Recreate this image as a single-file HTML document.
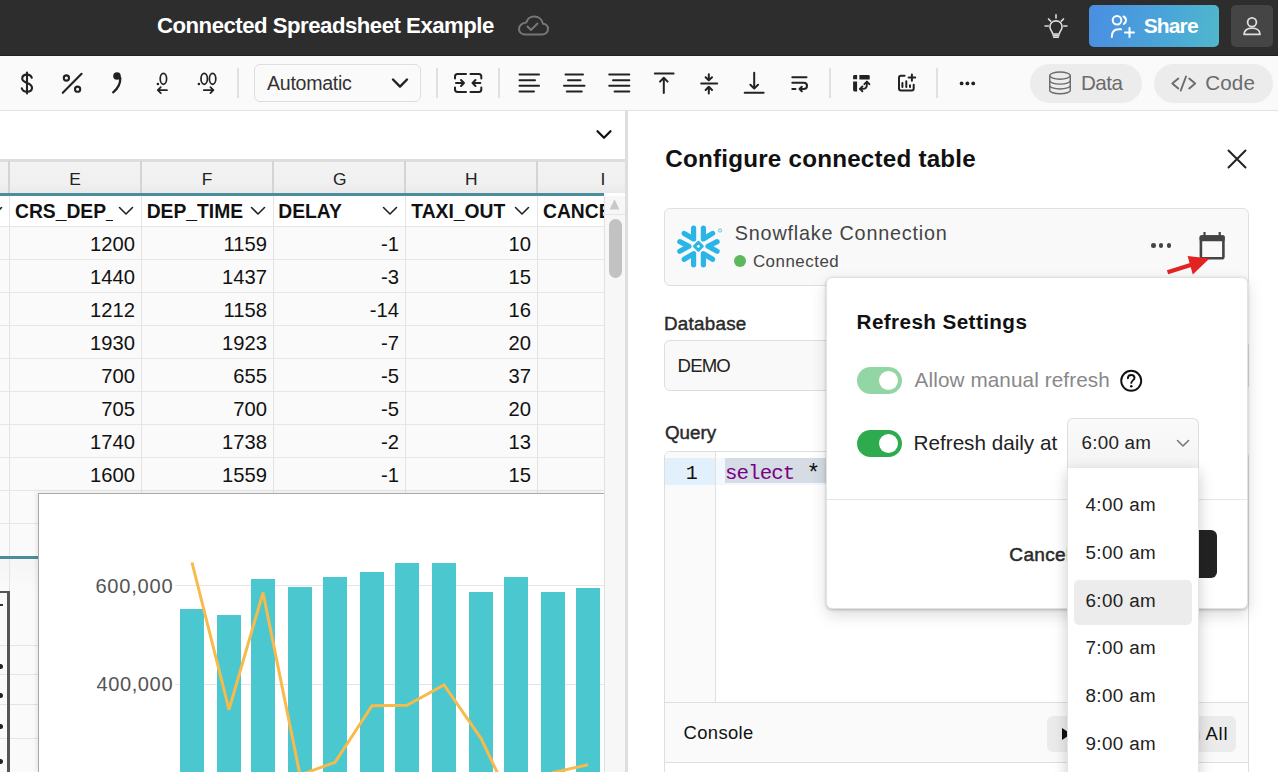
<!DOCTYPE html>
<html><head><meta charset="utf-8"><style>
html,body{margin:0;padding:0;}
body{width:1278px;height:772px;overflow:hidden;position:relative;background:#fff;font-family:'Liberation Sans', sans-serif;}
.t{position:absolute;white-space:nowrap;line-height:1;}
</style></head><body>
<div style="position:absolute;left:0px;top:0px;width:1278px;height:56px;background:#2d2d2d;"></div>
<div style="position:absolute;left:0px;top:55px;width:1278px;height:1px;background:#222;"></div>
<div class="t" style="left:157.00px;top:14.53px;font-size:22.2px;font-weight:700;color:#fff;font-family:'Liberation Sans', sans-serif;letter-spacing:-0.503px;">Connected Spreadsheet Example</div>
<svg style="position:absolute;left:514px;top:12px;" width="38" height="28" viewBox="0 0 38 28" fill="none"><path d="M11,22.5 H28 C31.5,22.5 34,20 34,17 C34,14 31.8,11.8 29,11.7 C28,7.5 24.5,4.5 20.3,4.5 C16.5,4.5 13.3,7 12.3,10.4 C8.3,10.6 5,13.5 5,17 C5,20 7.6,22.5 11,22.5 Z" stroke="#777" stroke-width="2" stroke-linejoin="round"/><path d="M13.5,14.5 L17,18 L23.5,11.5" stroke="#777" stroke-width="2" stroke-linecap="round" stroke-linejoin="round"/></svg>
<svg style="position:absolute;left:1041px;top:11px;" width="30" height="30" viewBox="0 0 32 32" fill="none"><g stroke="#ddd" stroke-width="1.7" stroke-linecap="round"><path d="M16,4 V7.5"/><path d="M8,8.5 L10.3,10.8"/><path d="M24,8.5 L21.7,10.8"/><path d="M4.3,16 H7.8"/><path d="M24.2,16 H27.7"/><path d="M12.5,24.5 C12.5,22 9.5,20.5 9.5,16.8 C9.5,13.2 12.4,10.5 16,10.5 C19.6,10.5 22.5,13.2 22.5,16.8 C22.5,20.5 19.5,22 19.5,24.5 Z" stroke-linejoin="round"/><path d="M13,26.3 H19"/><path d="M13.5,28 H18.5"/></g></svg>
<div style="position:absolute;left:1089px;top:5px;width:130px;height:42px;background:linear-gradient(100deg,#4a8ee2 0%,#4aa6d8 60%,#50b8cc 100%);border-radius:5px;"></div>
<svg style="position:absolute;left:1108px;top:13px;" width="30" height="28" viewBox="0 0 30 28" fill="none"><g stroke="#fff" stroke-width="2" stroke-linecap="round" fill="none"><circle cx="9" cy="7.3" r="4.3"/><path d="M3.8,24 C3.8,19 6,16.3 10.5,16.3 H13"/><path d="M15.5,3.5 C17.5,4.5 18,6 18,7.3 C18,8.8 17.3,10 15.8,11"/><path d="M21.5,15 V24"/><path d="M17,19.5 H26"/></g></svg>
<div class="t" style="left:1143.70px;top:14.85px;font-size:21px;font-weight:700;color:#fff;font-family:'Liberation Sans', sans-serif;letter-spacing:-0.872px;">Share</div>
<div style="position:absolute;left:1231px;top:5px;width:42px;height:42px;background:#454545;border-radius:5px;"></div>
<svg style="position:absolute;left:1240px;top:14px;" width="24" height="24" viewBox="0 0 24 24" fill="none"><g stroke="#ddd" stroke-width="1.8" fill="none" stroke-linejoin="round"><circle cx="12" cy="8.3" r="4.4"/><path d="M4,20.3 C4,16.5 7.5,14.2 12,14.2 C16.5,14.2 20,16.5 20,20.3 Z"/></g></svg>
<div style="position:absolute;left:0px;top:56px;width:1278px;height:54px;background:#fafafa;"></div>
<div style="position:absolute;left:0px;top:110px;width:1278px;height:1px;background:#e2e2e2;"></div>
<div style="position:absolute;left:237px;top:68px;width:2px;height:30px;background:#e0e0e0;"></div>
<div style="position:absolute;left:436px;top:68px;width:2px;height:30px;background:#e0e0e0;"></div>
<div style="position:absolute;left:498px;top:68px;width:2px;height:30px;background:#e0e0e0;"></div>
<div style="position:absolute;left:829px;top:68px;width:2px;height:30px;background:#e0e0e0;"></div>
<div style="position:absolute;left:936px;top:68px;width:2px;height:30px;background:#e0e0e0;"></div>
<svg style="position:absolute;left:0px;top:55px;" width="1278" height="55" viewBox="0 0 1278 55" fill="none"><g stroke="#222" stroke-width="2.1" stroke-linecap="round" fill="none" transform="translate(0,-55)"><path d="M27,72.5 V93.5"/><path d="M31.8,77.8 C31.2,75.8 29.6,74.6 27,74.6 C24,74.6 22.2,76.2 22.2,78.6 C22.2,81.2 24.6,82.1 27,83 C29.6,83.9 32,84.9 32,87.8 C32,90.4 30,91.8 27,91.8 C24.2,91.8 22.4,90.5 21.8,88.3"/><circle cx="66.4" cy="78" r="2.6"/><circle cx="77.6" cy="89.2" r="2.6"/><path d="M81.6,73.8 L62.8,92.8"/><path d="M120.3,78 C120.5,84 118.5,88 113.2,92.3" stroke-width="2.3"/></g><circle cx="117" cy="21" r="3.8" fill="#222"/><g transform="translate(0,-55)" fill="none" stroke="#222" stroke-width="1.7" stroke-linecap="round" stroke-linejoin="round"><ellipse cx="163.4" cy="78.8" rx="3.2" ry="5.5"/><path d="M157.8,90.2 H167 M160.8,87.2 L157.8,90.2 L160.8,93.2"/><ellipse cx="204.2" cy="78.8" rx="3.2" ry="5.5"/><ellipse cx="212.6" cy="78.8" rx="3.2" ry="5.5"/><path d="M203.8,90.2 H213.4 M210.4,87.2 L213.4,90.2 L210.4,93.2"/></g><circle cx="157.9" cy="29" r="1.3" fill="#222"/><circle cx="198.9" cy="29" r="1.3" fill="#222"/><g transform="translate(0,-55)" fill="none" stroke="#222" stroke-width="2" stroke-linecap="round" stroke-linejoin="round"><path d="M466,74 H457.5 Q455,74 455,76.5 V78.6 M455,87.4 V89.6 Q455,92 457.5,92 H466"/><path d="M470.5,74 H479 Q481.3,74 481.3,76.5 V78.6 M481.3,87.4 V89.6 Q481.3,92 479,92 H470.5"/><path d="M456,83 H464 M461,80 L464,83 L461,86"/><path d="M480.3,83 H472.5 M475.5,80 L472.5,83 L475.5,86"/><path d="M519.5,74.6 H539 M519.5,80.2 H535 M519.5,85.8 H539 M519.5,91.5 H534"/><path d="M565.5,74.6 H583 M568,80.2 H580.5 M564,85.8 H584.5 M566.8,91.5 H581.8"/><path d="M609.2,74.6 H629.3 M613,80.2 H629.3 M609.2,85.8 H629.3 M614.6,91.5 H629.3"/><path d="M654.8,73.4 H673.6 M663.8,77.8 V93 M660,81.6 L663.8,77.8 L667.6,81.6"/><path d="M701.2,83.6 H717.2 M708.8,74.2 V80.2 M705.6,77.2 L708.8,80.4 L712,77.2 M708.8,93.4 V87 M705.6,90 L708.8,86.8 L712,90"/><path d="M744.7,92.7 H763.6 M754.2,72.8 V88.6 M750.4,84.8 L754.2,88.6 L758,84.8"/><path d="M792.3,77.2 H806.5 M792.3,82.8 H803.5 C806,82.8 807,84.3 807,86 C807,87.7 806,89 803.5,89 H799.5 M801.8,86.7 L799.5,89 L801.8,91.3 M792.3,89 H795.5"/></g><g transform="translate(0,-55)"><path d="M853.1,76.3 Q853.1,75 854.4,75 H857.1 V79.3 H853.1 Z" fill="#222"/><path d="M859.4,75 H868.4 Q869.7,75 869.7,76.3 V79.4 H859.4 Z" fill="#222"/><path d="M853.1,81.6 H857.1 V91.4 H854.4 Q853.1,91.4 853.1,90.1 Z" fill="#222"/><path d="M860.2,88.9 H862.8 C865.6,88.9 866.9,87.2 866.9,84.4 V82" stroke="#222" stroke-width="1.9" fill="none" stroke-linecap="round"/><path d="M864.4,84.2 L866.9,81.6 L869.4,84.2" stroke="#222" stroke-width="1.9" fill="none" stroke-linecap="round" stroke-linejoin="round"/><path d="M862.4,86.5 L859.9,88.9 L862.4,91.3" stroke="#222" stroke-width="1.9" fill="none" stroke-linecap="round" stroke-linejoin="round"/><path d="M904.6,75.8 H901 Q899,75.8 899,77.8 V88.5 Q899,90.5 901,90.5 H911.7 Q913.7,90.5 913.7,88.5 V84.8" stroke="#222" stroke-width="2" fill="none" stroke-linecap="round"/><path d="M902.4,83 V87 M906.3,81.3 V87 M910,85.2 V87 M911.9,74.6 V80.8 M908.6,77.5 H915.2" stroke="#222" stroke-width="2" fill="none" stroke-linecap="round"/><circle cx="961.6" cy="83.4" r="1.9" fill="#222"/><circle cx="967.4" cy="83.4" r="1.9" fill="#222"/><circle cx="973.2" cy="83.4" r="1.9" fill="#222"/></g></svg>
<div style="position:absolute;left:254px;top:64px;width:167px;height:38px;box-sizing:border-box;border:1px solid #dedede;border-radius:6px;background:#fafafa;"></div>
<div class="t" style="left:267.00px;top:73.74px;font-size:19.6px;font-weight:400;color:#333;font-family:'Liberation Sans', sans-serif;letter-spacing:-0.290px;">Automatic</div>
<svg style="position:absolute;left:388px;top:74px;" width="24" height="18" viewBox="0 0 24 18" fill="none"><path d="M5,5.5 L12,12.6 L19,5.5" stroke="#222" stroke-width="2.4" fill="none" stroke-linecap="round" stroke-linejoin="round"/></svg>
<div style="position:absolute;left:1030px;top:64px;width:112px;height:39px;background:#ececec;border-radius:20px;"></div>
<svg style="position:absolute;left:1047px;top:70px;" width="26" height="26" viewBox="0 0 26 26" fill="none"><g stroke="#6b6b6b" stroke-width="1.4" fill="none"><ellipse cx="13" cy="5.6" rx="10.3" ry="3.6"/><path d="M2.7,5.6 V20.2 C2.7,22.2 7.3,23.8 13,23.8 C18.7,23.8 23.3,22.2 23.3,20.2 V5.6"/><path d="M2.7,10.5 C2.7,12.5 7.3,14.1 13,14.1 C18.7,14.1 23.3,12.5 23.3,10.5"/><path d="M2.7,15.4 C2.7,17.4 7.3,19 13,19 C18.7,19 23.3,17.4 23.3,15.4"/></g></svg>
<div class="t" style="left:1081.00px;top:72.99px;font-size:20.6px;font-weight:400;color:#6b6b6b;font-family:'Liberation Sans', sans-serif;letter-spacing:-0.516px;">Data</div>
<div style="position:absolute;left:1154px;top:64px;width:119px;height:39px;background:#ececec;border-radius:20px;"></div>
<svg style="position:absolute;left:1168px;top:72px;" width="32" height="22" viewBox="0 0 32 22" fill="none"><g stroke="#6b6b6b" stroke-width="1.9" fill="none" stroke-linecap="round" stroke-linejoin="round"><path d="M10.3,6.5 L4.3,11.5 L10.3,16.5"/><path d="M18,4.5 L12.8,18.5"/><path d="M21.2,6.5 L27.2,11.5 L21.2,16.5"/></g></svg>
<div class="t" style="left:1205.20px;top:72.99px;font-size:20.6px;font-weight:400;color:#6b6b6b;font-family:'Liberation Sans', sans-serif;letter-spacing:0.174px;">Code</div>
<div style="position:absolute;left:0px;top:111px;width:625px;height:48px;background:#fff;"></div>
<svg style="position:absolute;left:590px;top:124px;" width="28" height="22" viewBox="0 0 28 22" fill="none"><path d="M7.5,7.2 L14,13.8 L20.5,7.2" stroke="#111" stroke-width="2.2" fill="none" stroke-linecap="round" stroke-linejoin="round"/></svg>
<div style="position:absolute;left:0px;top:159px;width:625px;height:3px;background:#dedede;"></div>
<div style="position:absolute;left:0px;top:162px;width:625px;height:31px;background:linear-gradient(#f3f3f3 0%,#f0f0f0 70%,#e9e9e9 100%);"></div>
<div style="position:absolute;left:8px;top:161px;width:2px;height:32px;background:#d4d4d4;"></div>
<div style="position:absolute;left:140px;top:161px;width:2px;height:32px;background:#d4d4d4;"></div>
<div style="position:absolute;left:272px;top:161px;width:2px;height:32px;background:#d4d4d4;"></div>
<div style="position:absolute;left:404px;top:161px;width:2px;height:32px;background:#d4d4d4;"></div>
<div style="position:absolute;left:536px;top:161px;width:2px;height:32px;background:#d4d4d4;"></div>
<div class="t" style="left:69.00px;top:170.61px;font-size:17.4px;font-weight:400;color:#222;font-family:'Liberation Sans', sans-serif;letter-spacing:0.000px;width:12px;text-align:center;">E</div>
<div class="t" style="left:201.00px;top:170.61px;font-size:17.4px;font-weight:400;color:#222;font-family:'Liberation Sans', sans-serif;letter-spacing:0.000px;width:12px;text-align:center;">F</div>
<div class="t" style="left:333.00px;top:170.61px;font-size:17.4px;font-weight:400;color:#222;font-family:'Liberation Sans', sans-serif;letter-spacing:0.000px;width:12px;text-align:center;">G</div>
<div class="t" style="left:465.00px;top:170.61px;font-size:17.4px;font-weight:400;color:#222;font-family:'Liberation Sans', sans-serif;letter-spacing:0.000px;width:12px;text-align:center;">H</div>
<div class="t" style="left:597.00px;top:170.61px;font-size:17.4px;font-weight:400;color:#222;font-family:'Liberation Sans', sans-serif;letter-spacing:0.000px;width:12px;text-align:center;">I</div>
<div style="position:absolute;left:0px;top:196px;width:604px;height:576px;background:#fafafa;"></div>
<div style="position:absolute;left:0px;top:196px;width:604px;height:30px;background:#fff;"></div>
<div style="position:absolute;left:0px;top:193px;width:604px;height:3px;background:#4a8d9c;"></div>
<div style="position:absolute;left:0px;top:226px;width:604px;height:1px;background:#e6e6e6;"></div>
<div style="position:absolute;left:0px;top:259px;width:604px;height:1px;background:#e6e6e6;"></div>
<div style="position:absolute;left:0px;top:292px;width:604px;height:1px;background:#e6e6e6;"></div>
<div style="position:absolute;left:0px;top:325px;width:604px;height:1px;background:#e6e6e6;"></div>
<div style="position:absolute;left:0px;top:358px;width:604px;height:1px;background:#e6e6e6;"></div>
<div style="position:absolute;left:0px;top:391px;width:604px;height:1px;background:#e6e6e6;"></div>
<div style="position:absolute;left:0px;top:424px;width:604px;height:1px;background:#e6e6e6;"></div>
<div style="position:absolute;left:0px;top:457px;width:604px;height:1px;background:#e6e6e6;"></div>
<div style="position:absolute;left:0px;top:490px;width:604px;height:1px;background:#e6e6e6;"></div>
<div style="position:absolute;left:0px;top:523px;width:604px;height:1px;background:#e6e6e6;"></div>
<div style="position:absolute;left:0px;top:556px;width:604px;height:1px;background:#e6e6e6;"></div>
<div style="position:absolute;left:9px;top:196px;width:1px;height:576px;background:#e4e4e4;"></div>
<div style="position:absolute;left:141px;top:196px;width:1px;height:576px;background:#e4e4e4;"></div>
<div style="position:absolute;left:273px;top:196px;width:1px;height:576px;background:#e4e4e4;"></div>
<div style="position:absolute;left:405px;top:196px;width:1px;height:576px;background:#e4e4e4;"></div>
<div style="position:absolute;left:537px;top:196px;width:1px;height:576px;background:#e4e4e4;"></div>
<div class="t" style="left:15.00px;top:202.00px;font-size:19.3px;font-weight:700;color:#111;font-family:'Liberation Sans', sans-serif;letter-spacing:0.000px;width:98px;overflow:hidden;">CRS_DEP_TIME</div>
<svg style="position:absolute;left:118px;top:204px;" width="16" height="14" viewBox="0 0 16 14" fill="none"><path d="M1.5,3.5 L8,10 L14.5,3.5" stroke="#222" stroke-width="1.6" fill="none" stroke-linecap="round" stroke-linejoin="round"/></svg>
<div class="t" style="left:146.70px;top:202.00px;font-size:19.3px;font-weight:700;color:#111;font-family:'Liberation Sans', sans-serif;letter-spacing:0.000px;width:97.30000000000001px;overflow:hidden;">DEP_TIME</div>
<svg style="position:absolute;left:250px;top:204px;" width="16" height="14" viewBox="0 0 16 14" fill="none"><path d="M1.5,3.5 L8,10 L14.5,3.5" stroke="#222" stroke-width="1.6" fill="none" stroke-linecap="round" stroke-linejoin="round"/></svg>
<div class="t" style="left:278.30px;top:202.00px;font-size:19.3px;font-weight:700;color:#111;font-family:'Liberation Sans', sans-serif;letter-spacing:0.000px;width:97.69999999999999px;overflow:hidden;">DELAY</div>
<svg style="position:absolute;left:382px;top:204px;" width="16" height="14" viewBox="0 0 16 14" fill="none"><path d="M1.5,3.5 L8,10 L14.5,3.5" stroke="#222" stroke-width="1.6" fill="none" stroke-linecap="round" stroke-linejoin="round"/></svg>
<div class="t" style="left:411.30px;top:202.00px;font-size:19.3px;font-weight:700;color:#111;font-family:'Liberation Sans', sans-serif;letter-spacing:0.000px;width:97.69999999999999px;overflow:hidden;">TAXI_OUT</div>
<svg style="position:absolute;left:514px;top:204px;" width="16" height="14" viewBox="0 0 16 14" fill="none"><path d="M1.5,3.5 L8,10 L14.5,3.5" stroke="#222" stroke-width="1.6" fill="none" stroke-linecap="round" stroke-linejoin="round"/></svg>
<div class="t" style="left:543.00px;top:202.00px;font-size:19.3px;font-weight:700;color:#111;font-family:'Liberation Sans', sans-serif;letter-spacing:0.000px;width:61px;overflow:hidden;">CANCELLED</div>
<div class="t" style="left:55.00px;top:234.03px;font-size:20.2px;font-weight:400;color:#111;font-family:'Liberation Sans', sans-serif;letter-spacing:0.000px;width:80px;text-align:right;">1200</div>
<div class="t" style="left:187.00px;top:234.03px;font-size:20.2px;font-weight:400;color:#111;font-family:'Liberation Sans', sans-serif;letter-spacing:0.000px;width:80px;text-align:right;">1159</div>
<div class="t" style="left:319.00px;top:234.03px;font-size:20.2px;font-weight:400;color:#111;font-family:'Liberation Sans', sans-serif;letter-spacing:0.000px;width:80px;text-align:right;">-1</div>
<div class="t" style="left:451.00px;top:234.03px;font-size:20.2px;font-weight:400;color:#111;font-family:'Liberation Sans', sans-serif;letter-spacing:0.000px;width:80px;text-align:right;">10</div>
<div class="t" style="left:55.00px;top:267.03px;font-size:20.2px;font-weight:400;color:#111;font-family:'Liberation Sans', sans-serif;letter-spacing:0.000px;width:80px;text-align:right;">1440</div>
<div class="t" style="left:187.00px;top:267.03px;font-size:20.2px;font-weight:400;color:#111;font-family:'Liberation Sans', sans-serif;letter-spacing:0.000px;width:80px;text-align:right;">1437</div>
<div class="t" style="left:319.00px;top:267.03px;font-size:20.2px;font-weight:400;color:#111;font-family:'Liberation Sans', sans-serif;letter-spacing:0.000px;width:80px;text-align:right;">-3</div>
<div class="t" style="left:451.00px;top:267.03px;font-size:20.2px;font-weight:400;color:#111;font-family:'Liberation Sans', sans-serif;letter-spacing:0.000px;width:80px;text-align:right;">15</div>
<div class="t" style="left:55.00px;top:300.03px;font-size:20.2px;font-weight:400;color:#111;font-family:'Liberation Sans', sans-serif;letter-spacing:0.000px;width:80px;text-align:right;">1212</div>
<div class="t" style="left:187.00px;top:300.03px;font-size:20.2px;font-weight:400;color:#111;font-family:'Liberation Sans', sans-serif;letter-spacing:0.000px;width:80px;text-align:right;">1158</div>
<div class="t" style="left:319.00px;top:300.03px;font-size:20.2px;font-weight:400;color:#111;font-family:'Liberation Sans', sans-serif;letter-spacing:0.000px;width:80px;text-align:right;">-14</div>
<div class="t" style="left:451.00px;top:300.03px;font-size:20.2px;font-weight:400;color:#111;font-family:'Liberation Sans', sans-serif;letter-spacing:0.000px;width:80px;text-align:right;">16</div>
<div class="t" style="left:55.00px;top:333.03px;font-size:20.2px;font-weight:400;color:#111;font-family:'Liberation Sans', sans-serif;letter-spacing:0.000px;width:80px;text-align:right;">1930</div>
<div class="t" style="left:187.00px;top:333.03px;font-size:20.2px;font-weight:400;color:#111;font-family:'Liberation Sans', sans-serif;letter-spacing:0.000px;width:80px;text-align:right;">1923</div>
<div class="t" style="left:319.00px;top:333.03px;font-size:20.2px;font-weight:400;color:#111;font-family:'Liberation Sans', sans-serif;letter-spacing:0.000px;width:80px;text-align:right;">-7</div>
<div class="t" style="left:451.00px;top:333.03px;font-size:20.2px;font-weight:400;color:#111;font-family:'Liberation Sans', sans-serif;letter-spacing:0.000px;width:80px;text-align:right;">20</div>
<div class="t" style="left:55.00px;top:366.03px;font-size:20.2px;font-weight:400;color:#111;font-family:'Liberation Sans', sans-serif;letter-spacing:0.000px;width:80px;text-align:right;">700</div>
<div class="t" style="left:187.00px;top:366.03px;font-size:20.2px;font-weight:400;color:#111;font-family:'Liberation Sans', sans-serif;letter-spacing:0.000px;width:80px;text-align:right;">655</div>
<div class="t" style="left:319.00px;top:366.03px;font-size:20.2px;font-weight:400;color:#111;font-family:'Liberation Sans', sans-serif;letter-spacing:0.000px;width:80px;text-align:right;">-5</div>
<div class="t" style="left:451.00px;top:366.03px;font-size:20.2px;font-weight:400;color:#111;font-family:'Liberation Sans', sans-serif;letter-spacing:0.000px;width:80px;text-align:right;">37</div>
<div class="t" style="left:55.00px;top:399.03px;font-size:20.2px;font-weight:400;color:#111;font-family:'Liberation Sans', sans-serif;letter-spacing:0.000px;width:80px;text-align:right;">705</div>
<div class="t" style="left:187.00px;top:399.03px;font-size:20.2px;font-weight:400;color:#111;font-family:'Liberation Sans', sans-serif;letter-spacing:0.000px;width:80px;text-align:right;">700</div>
<div class="t" style="left:319.00px;top:399.03px;font-size:20.2px;font-weight:400;color:#111;font-family:'Liberation Sans', sans-serif;letter-spacing:0.000px;width:80px;text-align:right;">-5</div>
<div class="t" style="left:451.00px;top:399.03px;font-size:20.2px;font-weight:400;color:#111;font-family:'Liberation Sans', sans-serif;letter-spacing:0.000px;width:80px;text-align:right;">20</div>
<div class="t" style="left:55.00px;top:432.03px;font-size:20.2px;font-weight:400;color:#111;font-family:'Liberation Sans', sans-serif;letter-spacing:0.000px;width:80px;text-align:right;">1740</div>
<div class="t" style="left:187.00px;top:432.03px;font-size:20.2px;font-weight:400;color:#111;font-family:'Liberation Sans', sans-serif;letter-spacing:0.000px;width:80px;text-align:right;">1738</div>
<div class="t" style="left:319.00px;top:432.03px;font-size:20.2px;font-weight:400;color:#111;font-family:'Liberation Sans', sans-serif;letter-spacing:0.000px;width:80px;text-align:right;">-2</div>
<div class="t" style="left:451.00px;top:432.03px;font-size:20.2px;font-weight:400;color:#111;font-family:'Liberation Sans', sans-serif;letter-spacing:0.000px;width:80px;text-align:right;">13</div>
<div class="t" style="left:55.00px;top:465.03px;font-size:20.2px;font-weight:400;color:#111;font-family:'Liberation Sans', sans-serif;letter-spacing:0.000px;width:80px;text-align:right;">1600</div>
<div class="t" style="left:187.00px;top:465.03px;font-size:20.2px;font-weight:400;color:#111;font-family:'Liberation Sans', sans-serif;letter-spacing:0.000px;width:80px;text-align:right;">1559</div>
<div class="t" style="left:319.00px;top:465.03px;font-size:20.2px;font-weight:400;color:#111;font-family:'Liberation Sans', sans-serif;letter-spacing:0.000px;width:80px;text-align:right;">-1</div>
<div class="t" style="left:451.00px;top:465.03px;font-size:20.2px;font-weight:400;color:#111;font-family:'Liberation Sans', sans-serif;letter-spacing:0.000px;width:80px;text-align:right;">15</div>
<svg style="position:absolute;left:-13px;top:204px;" width="16" height="14" viewBox="0 0 16 14" fill="none"><path d="M1.5,3.5 L8,10 L14.5,3.5" stroke="#222" stroke-width="1.6" fill="none" stroke-linecap="round" stroke-linejoin="round"/></svg>
<div style="position:absolute;left:604px;top:196px;width:21px;height:576px;background:#f7f7f7;box-sizing:border-box;border-left:1px solid #e2e2e2;"></div>
<svg style="position:absolute;left:604px;top:196px;" width="21" height="20" viewBox="0 0 21 20" fill="none"><path d="M5.5,13.5 L10.5,3.2 L15.5,13.5 Z" fill="#c9c9c9"/></svg>
<div style="position:absolute;left:605px;top:214px;width:20px;height:1px;background:#e4e4e4;"></div>
<div style="position:absolute;left:609px;top:219px;width:13px;height:59px;background:#c2c2c2;border-radius:7px;"></div>
<div style="position:absolute;left:625px;top:110px;width:3px;height:662px;background:#dedede;"></div>
<div style="position:absolute;left:0px;top:556px;width:38px;height:3px;background:#4a8d9c;"></div>
<div style="position:absolute;left:0px;top:559px;width:38px;height:32px;background:linear-gradient(#f5f5f5,#fafafa);"></div>
<div style="position:absolute;left:0px;top:645px;width:38px;height:1px;background:#e4e4e4;"></div>
<div style="position:absolute;left:0px;top:674px;width:38px;height:1px;background:#e4e4e4;"></div>
<div style="position:absolute;left:0px;top:704px;width:38px;height:1px;background:#e4e4e4;"></div>
<div style="position:absolute;left:0px;top:738px;width:38px;height:1px;background:#e4e4e4;"></div>
<div style="position:absolute;left:9px;top:559px;width:1px;height:213px;background:#e4e4e4;"></div>
<div style="position:absolute;left:0px;top:591px;width:9px;height:2px;background:#555;"></div>
<div style="position:absolute;left:7px;top:591px;width:2.5px;height:181px;background:#555;"></div>
<div style="position:absolute;left:0px;top:604px;width:3px;height:1.6px;background:#333;"></div>
<div style="position:absolute;left:-2px;top:663.5px;width:4.5px;height:5px;background:#222;border-radius:2.5px;"></div>
<div style="position:absolute;left:-2px;top:693.0px;width:4.5px;height:5px;background:#222;border-radius:2.5px;"></div>
<div style="position:absolute;left:-2px;top:723.5px;width:4.5px;height:5px;background:#222;border-radius:2.5px;"></div>
<div style="position:absolute;left:-2px;top:758.5px;width:4.5px;height:5px;background:#222;border-radius:2.5px;"></div>
<div style="position:absolute;left:38px;top:493px;width:566px;height:279px;background:#fff;box-sizing:border-box;border-left:1.5px solid #a9a9a9;border-top:1.5px solid #a9a9a9;box-shadow:-2px -1px 4px rgba(0,0,0,0.08);"></div>
<div style="position:absolute;left:175px;top:585px;width:429px;height:1px;background:#e5e5e5;"></div>
<div style="position:absolute;left:175px;top:684px;width:429px;height:1px;background:#e5e5e5;"></div>
<div class="t" style="left:95.40px;top:575.61px;font-size:20.1px;font-weight:400;color:#555;font-family:'Liberation Sans', sans-serif;letter-spacing:0.757px;">600,000</div>
<div class="t" style="left:96.40px;top:674.31px;font-size:20.1px;font-weight:400;color:#555;font-family:'Liberation Sans', sans-serif;letter-spacing:0.590px;">400,000</div>
<div style="position:absolute;left:180px;top:609px;width:24px;height:163px;background:#4bc7cf;"></div>
<div style="position:absolute;left:217px;top:615px;width:24px;height:157px;background:#4bc7cf;"></div>
<div style="position:absolute;left:251px;top:579px;width:24px;height:193px;background:#4bc7cf;"></div>
<div style="position:absolute;left:288px;top:587px;width:24px;height:185px;background:#4bc7cf;"></div>
<div style="position:absolute;left:323px;top:577px;width:24px;height:195px;background:#4bc7cf;"></div>
<div style="position:absolute;left:360px;top:572px;width:24px;height:200px;background:#4bc7cf;"></div>
<div style="position:absolute;left:395px;top:562.5px;width:24px;height:209.5px;background:#4bc7cf;"></div>
<div style="position:absolute;left:432px;top:563px;width:24px;height:209px;background:#4bc7cf;"></div>
<div style="position:absolute;left:469px;top:592px;width:24px;height:180px;background:#4bc7cf;"></div>
<div style="position:absolute;left:504px;top:577px;width:24px;height:195px;background:#4bc7cf;"></div>
<div style="position:absolute;left:541px;top:592px;width:24px;height:180px;background:#4bc7cf;"></div>
<div style="position:absolute;left:576px;top:588px;width:24px;height:184px;background:#4bc7cf;"></div>
<svg style="position:absolute;left:0px;top:0px;overflow:hidden;" width="604" height="772" viewBox="0 0 604 772" fill="none"><polyline points="192,562.5 229,709.7 263,592.6 300,775 335,762.3 372,705.8 407,705.2 444,685 481,738.3 516,812 553,772.5 588,764.7" stroke="#f7ba4b" stroke-width="3" fill="none" stroke-linejoin="miter" stroke-miterlimit="2.2"/></svg>
<div style="position:absolute;left:628px;top:111px;width:650px;height:661px;background:#fff;"></div>
<div class="t" style="left:665.30px;top:146.83px;font-size:24.2px;font-weight:700;color:#111;font-family:'Liberation Sans', sans-serif;letter-spacing:0.225px;">Configure connected table</div>
<svg style="position:absolute;left:1222px;top:144px;" width="30" height="30" viewBox="0 0 30 30" fill="none"><path d="M6.5,6.5 L23.5,23.5 M23.5,6.5 L6.5,23.5" stroke="#222" stroke-width="2" stroke-linecap="round"/></svg>
<div style="position:absolute;left:664px;top:208px;width:585px;height:78px;box-sizing:border-box;background:#f9f9f9;border:1px solid #e0e0e0;border-radius:6px;"></div>
<svg style="position:absolute;left:670px;top:218px;" width="60" height="56" viewBox="0 0 60 56" fill="none"><g stroke="#29b5e8" stroke-width="5.2" stroke-linecap="round" stroke-linejoin="round" fill="none" transform="translate(-670,-218)"><path d="M693.6,228 V239 L684.2,233.4"/><path d="M703.4,228 V239 L712.6,233.4"/><path d="M679.8,241.6 L688.9,246.3 L679.8,251.2"/><path d="M717.1,241.6 L708,246.3 L717.1,251.2"/><path d="M693.6,264.8 V253.6 L684.2,259.3"/><path d="M703.4,264.8 V253.6 L712.6,259.3"/><path d="M698.4,242.4 L702.3,246.3 L698.4,250.2 L694.5,246.3 Z" stroke-width="3"/></g><circle cx="50" cy="12.5" r="1.6" stroke="#29b5e8" stroke-width="0.8" fill="none"/></svg>
<div class="t" style="left:734.80px;top:223.87px;font-size:19.8px;font-weight:400;color:#444;font-family:'Liberation Sans', sans-serif;letter-spacing:0.798px;">Snowflake Connection</div>
<div style="position:absolute;left:734px;top:255px;width:12px;height:12px;background:#5cb85c;border-radius:50%;"></div>
<div class="t" style="left:752.90px;top:254.13px;font-size:16.9px;font-weight:400;color:#444;font-family:'Liberation Sans', sans-serif;letter-spacing:0.512px;">Connected</div>
<div style="position:absolute;left:1151.0px;top:243.4px;width:4.6px;height:4.6px;background:#444;border-radius:50%;"></div>
<div style="position:absolute;left:1158.8px;top:243.4px;width:4.6px;height:4.6px;background:#444;border-radius:50%;"></div>
<div style="position:absolute;left:1166.6000000000001px;top:243.4px;width:4.6px;height:4.6px;background:#444;border-radius:50%;"></div>
<svg style="position:absolute;left:1196px;top:228px;" width="32" height="34" viewBox="0 0 32 34" fill="none"><g transform="translate(-1196,-228)"><rect x="1200.9" y="236.6" width="22.5" height="21.6" rx="1.5" stroke="#444" stroke-width="2.6" fill="none"/><rect x="1199.6" y="235.3" width="25.1" height="6" rx="1.5" fill="#444"/><rect x="1203.4" y="232" width="2.2" height="4" fill="#444"/><rect x="1218.6" y="232" width="2.2" height="4" fill="#444"/></g></svg>
<div class="t" style="left:664.00px;top:314.62px;font-size:18.8px;font-weight:400;color:#2a2a2a;font-family:'Liberation Sans', sans-serif;letter-spacing:0.264px;-webkit-text-stroke:0.45px #2a2a2a;">Database</div>
<div style="position:absolute;left:664px;top:340px;width:585px;height:51px;box-sizing:border-box;background:#f9f9f9;border:1px solid #dedede;border-radius:6px;"></div>
<div class="t" style="left:677.60px;top:356.89px;font-size:18.6px;font-weight:400;color:#222;font-family:'Liberation Sans', sans-serif;letter-spacing:-0.873px;">DEMO</div>
<div class="t" style="left:665.00px;top:424.22px;font-size:18.8px;font-weight:400;color:#2a2a2a;font-family:'Liberation Sans', sans-serif;letter-spacing:-0.013px;-webkit-text-stroke:0.45px #2a2a2a;">Query</div>
<div style="position:absolute;left:664px;top:451px;width:585px;height:312px;box-sizing:border-box;background:#fff;border:1px solid #dedede;border-radius:6px 6px 0 0;"></div>
<div style="position:absolute;left:665px;top:452px;width:50px;height:250px;background:#fafafa;border-radius:5px 0 0 0;"></div>
<div style="position:absolute;left:715px;top:452px;width:1px;height:250px;background:#e0e0e0;"></div>
<div style="position:absolute;left:665px;top:458px;width:50px;height:27px;background:#e2f0fc;"></div>
<div style="position:absolute;left:716px;top:458px;width:532px;height:27px;background:#f1f8fe;"></div>
<div style="position:absolute;left:725px;top:458px;width:110px;height:25px;background:#d5dce3;"></div>
<div class="t" style="left:685.80px;top:463.80px;font-size:20px;font-weight:400;color:#111;font-family:'Liberation Mono', monospace;letter-spacing:-2.000px;">1</div>
<div class="t" style="left:724.90px;top:463.89px;font-size:20.8px;font-weight:400;color:#770088;font-family:'Liberation Mono', monospace;letter-spacing:-0.900px;">select</div>
<div class="t" style="left:806.60px;top:463.92px;font-size:23px;font-weight:400;color:#111;font-family:'Liberation Mono', monospace;letter-spacing:0.100px;">*</div>
<div style="position:absolute;left:664px;top:702px;width:585px;height:61px;box-sizing:border-box;background:#fafafa;border-top:1px solid #dedede;border-bottom:1px solid #dedede;border-left:1px solid #dedede;border-right:1px solid #dedede;"></div>
<div class="t" style="left:683.60px;top:723.76px;font-size:18.4px;font-weight:400;color:#111;font-family:'Liberation Sans', sans-serif;letter-spacing:0.359px;">Console</div>
<div style="position:absolute;left:1047px;top:716px;width:189px;height:36px;background:#ebebeb;border-radius:6px;"></div>
<svg style="position:absolute;left:1060px;top:726px;" width="14" height="16" viewBox="0 0 14 16" fill="none"><path d="M2,2 L11,8 L2,14 Z" fill="#111"/></svg>
<div class="t" style="left:1120.00px;top:724.56px;font-size:18.4px;font-weight:400;color:#111;font-family:'Liberation Sans', sans-serif;letter-spacing:0.000px;width:80px;text-align:right;">Run</div>
<div class="t" style="left:1205.60px;top:724.56px;font-size:18.4px;font-weight:400;color:#111;font-family:'Liberation Sans', sans-serif;letter-spacing:0.724px;">All</div>
<div style="position:absolute;left:664px;top:763px;width:585px;height:9px;box-sizing:border-box;border-left:1px solid #dedede;border-right:1px solid #dedede;background:#fff;"></div>
<div style="position:absolute;left:826px;top:277px;width:422px;height:332px;box-sizing:border-box;background:#fff;border:1px solid #e2e2e2;border-radius:6px;box-shadow:0 1px 3px rgba(0,0,0,0.22),0 6px 16px rgba(0,0,0,0.14);"></div>
<div class="t" style="left:856.60px;top:311.70px;font-size:20.7px;font-weight:700;color:#111;font-family:'Liberation Sans', sans-serif;letter-spacing:0.394px;">Refresh Settings</div>
<div style="position:absolute;left:857px;top:367px;width:45px;height:27px;background:#93d6a6;border-radius:14px;"></div>
<div style="position:absolute;left:879px;top:371px;width:19px;height:19px;background:#fff;border-radius:50%;"></div>
<div class="t" style="left:914.60px;top:369.50px;font-size:20.7px;font-weight:400;color:#888;font-family:'Liberation Sans', sans-serif;letter-spacing:0.107px;">Allow manual refresh</div>
<svg style="position:absolute;left:1118px;top:368px;" width="26" height="26" viewBox="0 0 26 26" fill="none"><circle cx="13.2" cy="12.8" r="10" stroke="#111" stroke-width="1.9" fill="none"/><path d="M9.9,10.3 C9.9,8.3 11.3,7 13.2,7 C15.1,7 16.5,8.2 16.5,10 C16.5,12.2 13.3,12.6 13.3,14.9" stroke="#111" stroke-width="1.9" fill="none" stroke-linecap="round"/><circle cx="13.3" cy="18.2" r="1.3" fill="#111"/></svg>
<div style="position:absolute;left:857px;top:430px;width:45px;height:27px;background:#2eaa4f;border-radius:14px;"></div>
<div style="position:absolute;left:879px;top:434px;width:19px;height:19px;background:#fff;border-radius:50%;"></div>
<div class="t" style="left:913.60px;top:432.70px;font-size:20.7px;font-weight:400;color:#222;font-family:'Liberation Sans', sans-serif;letter-spacing:-0.012px;">Refresh daily at</div>
<div style="position:absolute;left:1067px;top:418px;width:132px;height:51px;box-sizing:border-box;background:linear-gradient(#fafafa,#f4f4f4);border:1px solid #dedede;border-bottom:none;border-radius:6px 6px 0 0;"></div>
<div class="t" style="left:1081.50px;top:434.02px;font-size:18.8px;font-weight:400;color:#222;font-family:'Liberation Sans', sans-serif;letter-spacing:0.264px;">6:00 am</div>
<svg style="position:absolute;left:1172px;top:434px;" width="22" height="20" viewBox="0 0 22 20" fill="none"><path d="M5.5,6.5 L11,12 L16.5,6.5" stroke="#777" stroke-width="1.6" fill="none" stroke-linecap="round" stroke-linejoin="round"/></svg>
<div style="position:absolute;left:827px;top:499px;width:420px;height:1px;background:#e6e6e6;"></div>
<div class="t" style="left:1009.30px;top:544.76px;font-size:19.1px;font-weight:400;color:#2a2a2a;font-family:'Liberation Sans', sans-serif;letter-spacing:0.000px;-webkit-text-stroke:0.5px #2a2a2a;letter-spacing:0.3px;">Cancel</div>
<div style="position:absolute;left:1068px;top:530px;width:149px;height:48px;background:#232323;border-radius:6px;"></div>
<div style="position:absolute;left:1067px;top:468px;width:132px;height:320px;background:#fff;box-shadow:0 4px 14px rgba(0,0,0,0.2);border-left:1px solid #e4e4e4;border-right:1px solid #e4e4e4;box-sizing:border-box;"></div>
<div style="position:absolute;left:1074px;top:580px;width:118px;height:45px;background:#ececec;border-radius:5px;"></div>
<div class="t" style="left:1085.50px;top:495.72px;font-size:18.8px;font-weight:400;color:#222;font-family:'Liberation Sans', sans-serif;letter-spacing:0.380px;">4:00 am</div>
<div class="t" style="left:1085.50px;top:543.62px;font-size:18.8px;font-weight:400;color:#222;font-family:'Liberation Sans', sans-serif;letter-spacing:0.380px;">5:00 am</div>
<div class="t" style="left:1085.50px;top:591.52px;font-size:18.8px;font-weight:400;color:#222;font-family:'Liberation Sans', sans-serif;letter-spacing:0.380px;">6:00 am</div>
<div class="t" style="left:1085.50px;top:639.42px;font-size:18.8px;font-weight:400;color:#222;font-family:'Liberation Sans', sans-serif;letter-spacing:0.380px;">7:00 am</div>
<div class="t" style="left:1085.50px;top:687.32px;font-size:18.8px;font-weight:400;color:#222;font-family:'Liberation Sans', sans-serif;letter-spacing:0.380px;">8:00 am</div>
<div class="t" style="left:1085.50px;top:735.22px;font-size:18.8px;font-weight:400;color:#222;font-family:'Liberation Sans', sans-serif;letter-spacing:0.380px;">9:00 am</div>
<svg style="position:absolute;left:1160px;top:250px;" width="56" height="30" viewBox="0 0 56 30" fill="none"><g transform="translate(-1160,-250)"><path d="M1167.5,272.2 L1193,264.3" stroke="#e32222" stroke-width="4.2" stroke-linecap="butt"/><path d="M1209.5,258.6 L1187.6,256 L1192.8,274.5 Z" fill="#e32222"/></g></svg>
</body></html>
